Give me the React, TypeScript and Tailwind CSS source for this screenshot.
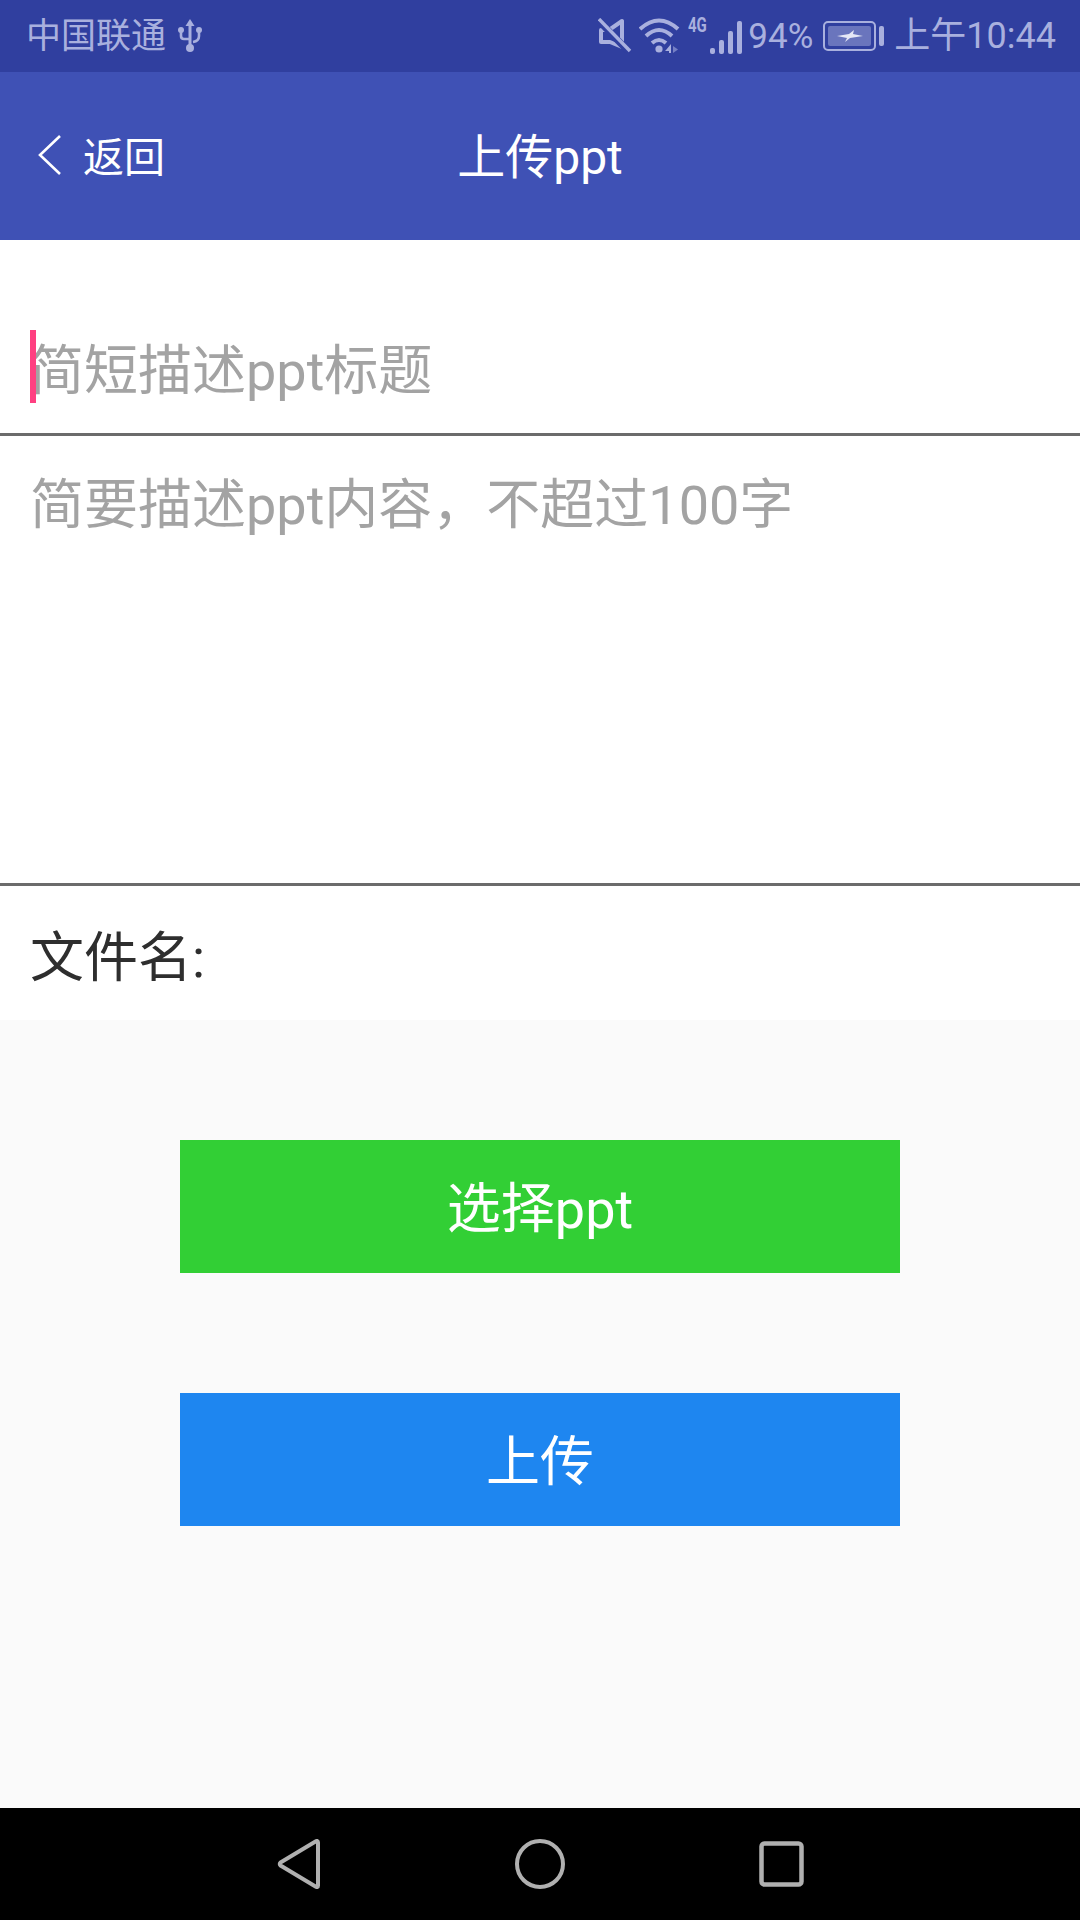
import React from "react";

const font = "font-['Roboto','Noto_Sans_CJK_SC',sans-serif]";

const StatusBar = () => (
  <div className="h-[72px] bg-[#303f9f] flex items-center justify-between pl-[26px] pr-[24px] text-[#a9b0de]">
    <div className="flex items-center gap-[11px]">
      <span className="text-[35px] leading-none">中国联通</span>
      <svg width="26" height="36" viewBox="0 0 24 36" fill="none" className="text-[#a9b0de]">
        <path d="M12 1 L16.5 8 H7.5 Z" fill="currentColor" />
        <path d="M12 6 V30" stroke="currentColor" strokeWidth="3" />
        <circle cx="12" cy="30" r="4" fill="currentColor" />
        <path d="M3 14 V18 Q3 21 6 21 H12 M21 14 V18 Q21 23 15 24" stroke="currentColor" strokeWidth="2.6" fill="none" />
        <circle cx="3" cy="12" r="3" fill="currentColor" />
        <circle cx="21" cy="12" r="3" fill="currentColor" />
      </svg>
    </div>
    <div className="flex items-center">
      {/* muted */}
      <svg width="34" height="36" viewBox="0 0 34 36" fill="none">
        <path d="M11 12 L24 3 V29 L12 24 H3 V12 Z" stroke="#a9b0de" strokeWidth="4" strokeLinejoin="round" />
        <path d="M1 3 L32 35" stroke="#303f9f" strokeWidth="7" />
        <path d="M1 1 L32 33" stroke="#a9b0de" strokeWidth="3.4" />
      </svg>
      {/* wifi */}
      <svg width="42" height="36" viewBox="0 0 42 36" fill="none" className="ml-[7px]">
        <path d="M1 11 Q20 -6 39 11" stroke="#a9b0de" strokeWidth="4" />
        <path d="M7 18 Q20 6 33 18" stroke="#a9b0de" strokeWidth="4" />
        <path d="M13 25 Q20 19 27 25" stroke="#a9b0de" strokeWidth="4" />
        <circle cx="20" cy="31" r="3.6" fill="#a9b0de" />
        <path d="M27 32 L32 26 V35 H30 V33 H26 Z" fill="#a9b0de" />
        <path d="M34 28 L39 31.5 L34 35 Z" fill="#7580c4" />
      </svg>
      {/* signal */}
      <div className="relative w-[54px] h-[36px] ml-[7px]">
        <span className="absolute left-0 top-[-3px] text-[20px] leading-none font-bold text-[#a9b0de] scale-x-75 origin-left">4G</span>
        <div className="absolute right-0 bottom-0 flex items-end gap-[4px]">
          <div className="w-[5px] h-[6px] bg-[#a9b0de] rounded-[2px]" />
          <div className="w-[5px] h-[14px] bg-[#a9b0de] rounded-[2px]" />
          <div className="w-[5px] h-[23px] bg-[#a9b0de] rounded-[2px]" />
          <div className="w-[5px] h-[33px] bg-[#a9b0de] rounded-[2px]" />
        </div>
      </div>
      <span className="text-[35px] leading-none ml-[6px]">94%</span>
      {/* battery */}
      <div className="flex items-center ml-[10px]">
        <div className="w-[53px] h-[30px] border-[2px] border-[#a9b0de] rounded-[5px] p-[3px]">
          <div className="w-[43px] h-full bg-[#6a75bd] flex items-center justify-center rounded-[2px]">
            <svg width="26" height="14" viewBox="0 0 26 14">
              <path d="M0 7 L12 5 L17 1 L16 5 L26 7 L13 9 L8 13 L10 9 Z" fill="#e6e8f6" />
            </svg>
          </div>
        </div>
        <div className="w-[5px] h-[20px] bg-[#a9b0de] rounded-[2px] ml-[3px]" />
      </div>
      <span className="text-[36px] leading-none ml-[10px]">上午10:44</span>
    </div>
  </div>
);

const Header = () => (
  <div className="relative h-[168px] bg-[#3f51b5] flex items-center justify-center text-white">
    <div className="absolute left-[38px] top-0 h-full flex items-center">
      <svg width="24" height="42" viewBox="0 0 24 42" fill="none" className="mt-[-3px]">
        <path d="M22 2 L2 21 L22 40" stroke="white" strokeWidth="2.6" />
      </svg>
      <span className="text-[41px] leading-none ml-[21px] mt-[5px]">返回</span>
    </div>
    <span className="text-[48px] leading-none mt-[4px]">上传ppt</span>
  </div>
);

const Form = () => (
  <div className="bg-white">
    <div className="h-[196px] relative border-b-[3px] border-[#6b6b6b] pl-[30px] pt-[100px]">
      <div className="absolute left-[30px] top-[90px] w-[6px] h-[73px] bg-[#ff4081]" />
      <p className="text-[54px] leading-[64px] text-[#a3a3a3]">简短描述ppt标题</p>
    </div>
    <div className="h-[450px] border-b-[3px] border-[#6b6b6b] pl-[30px] pt-[38px]">
      <p className="text-[54px] leading-[64px] text-[#a3a3a3]">简要描述ppt内容，不超过100字</p>
    </div>
    <div className="h-[134px] pl-[30px] pt-[41px]">
      <p className="text-[54px] leading-[64px] text-[#2e2e2e]">文件名:</p>
    </div>
  </div>
);

const Actions = () => (
  <div className="flex-1 bg-[#fafafa] flex flex-col items-center pt-[120px] gap-[120px]">
    <button className="w-[720px] h-[133px] bg-[#32cf35] text-white text-[54px] leading-none pt-[6px]">选择ppt</button>
    <button className="w-[720px] h-[133px] bg-[#1e86f0] text-white text-[54px] leading-none pt-[6px]">上传</button>
  </div>
);

const NavBar = () => (
  <div className="h-[112px] bg-black flex items-center justify-center gap-[194px]">
    <svg width="44" height="50" viewBox="0 0 44 50" fill="none">
      <path d="M41 3.5 V46.5 Q41 49 38.5 47.5 L3.5 26.5 Q2 25 3.5 23.5 L38.5 2.5 Q41 1 41 3.5 Z" stroke="#b0b0b0" strokeWidth="4" strokeLinejoin="round" />
    </svg>
    <svg width="50" height="50" viewBox="0 0 50 50" fill="none">
      <ellipse cx="25" cy="25" rx="23" ry="23" stroke="#b0b0b0" strokeWidth="4" />
    </svg>
    <svg width="45" height="46" viewBox="0 0 45 46" fill="none">
      <rect x="2.5" y="2.5" width="40" height="41" rx="3" stroke="#b0b0b0" strokeWidth="4.5" />
    </svg>
  </div>
);

const App = () => {
  return (
    <div className={`w-[1080px] h-[1920px] flex flex-col overflow-hidden ${font}`}>
      <StatusBar />
      <Header />
      <Form />
      <Actions />
      <NavBar />
    </div>
  );
};

export default App;
